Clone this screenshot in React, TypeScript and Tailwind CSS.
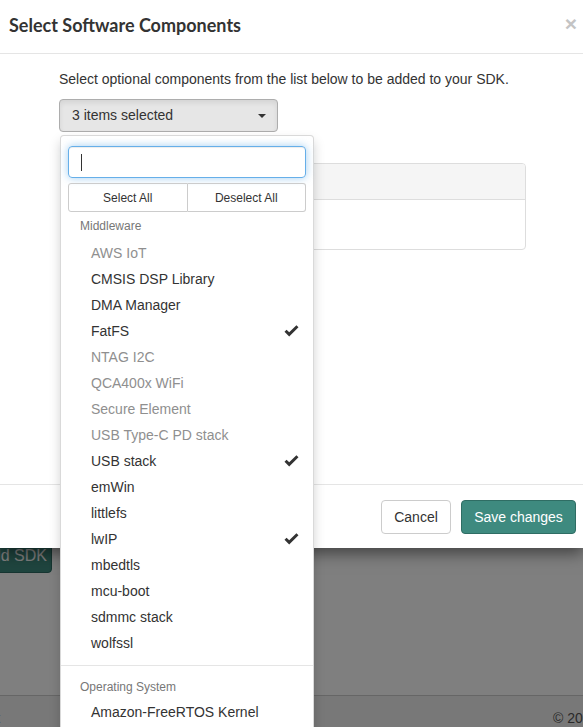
import React from "react";

type Item = { label: string; disabled?: boolean; checked?: boolean };

const middleware: Item[] = [
  { label: "AWS IoT", disabled: true },
  { label: "CMSIS DSP Library" },
  { label: "DMA Manager" },
  { label: "FatFS", checked: true },
  { label: "NTAG I2C", disabled: true },
  { label: "QCA400x WiFi", disabled: true },
  { label: "Secure Element", disabled: true },
  { label: "USB Type-C PD stack", disabled: true },
  { label: "USB stack", checked: true },
  { label: "emWin" },
  { label: "littlefs" },
  { label: "lwIP", checked: true },
  { label: "mbedtls" },
  { label: "mcu-boot" },
  { label: "sdmmc stack" },
  { label: "wolfssl" },
];

function Check() {
  return (
    <svg width="15" height="12" viewBox="0 0 15 12" className="shrink-0">
      <path d="M0.5 6.8 L2.6 4.7 L5.2 7.3 L12.4 0.2 L14.5 2.3 L5.2 11.6 Z" fill="#333" />
    </svg>
  );
}

function MenuItem({ item }: { item: Item }) {
  return (
    <div
      className={`flex items-center h-[26px] pl-[30px] pr-[14px] text-[14px] ${
        item.disabled ? "text-[#8f8f8f]" : "text-[#333]"
      }`}
    >
      <span className="flex-1">{item.label}</span>
      {item.checked && <Check />}
    </div>
  );
}

function Dropdown() {
  return (
    <div className="absolute left-[1px] top-[36px] w-[254px] bg-white border border-black/15 rounded-[4px] shadow-[0_6px_12px_rgba(0,0,0,0.175)] pt-[10px] pb-[6px]">
      <div className="px-[7px]">
        <div className="h-[32px] border border-[#66afe9] rounded-[4px] shadow-[inset_0_1px_1px_rgba(0,0,0,0.075),0_0_8px_rgba(102,175,233,0.6)] flex items-center pl-[12px]">
          <span className="w-[1px] h-[17px] bg-[#333]" />
        </div>
        <div className="flex mt-[5px] h-[29px] text-[12px] text-[#333]">
          <div className="flex-1 flex items-center justify-center border border-[#ccc] rounded-l-[3px]">Select All</div>
          <div className="flex-1 flex items-center justify-center border border-l-0 border-[#ccc] rounded-r-[3px]">Deselect All</div>
        </div>
      </div>
      <div className="pl-[19px] pt-[6px] h-[28px] text-[12px] text-[#777] leading-[17px]">Middleware</div>
      {middleware.map((it) => (
        <MenuItem key={it.label} item={it} />
      ))}
      <div className="h-[1px] bg-[#e5e5e5] mt-[9px] mb-[10px]" />
      <div className="pl-[19px] h-[23px] text-[12px] text-[#777] leading-[17px] pt-[3px]">Operating System</div>
      <MenuItem item={{ label: "Amazon-FreeRTOS Kernel" }} />
      <MenuItem item={{ label: "Baremetal" }} />
    </div>
  );
}

export default function App() {
  return (
    <div className="relative h-[727px] w-full overflow-hidden bg-white font-['Liberation_Sans',Arial,sans-serif] text-[#333]">
      {/* page behind the modal */}
      <div className="flex flex-col h-full">
        <div className="h-[520px]" />
        <div className="flex">
          <div className="ml-[-67px] h-[53px] w-[119px] bg-[#3e8a7f] border border-[#2f6d64] rounded-[4px] text-white text-[16px] flex items-end pb-[4px] pl-[40px] whitespace-nowrap">
            Build SDK
          </div>
        </div>
        <div className="flex-1" />
        <div className="h-[32px] border-t border-[#ccc] bg-[#f0f0f0] flex justify-between items-center text-[14px] text-[#555] pt-[14px] whitespace-nowrap">
          <span className="ml-[-49px]">Support</span>
          <span className="mr-[-48px]">© 2021 NXP</span>
        </div>
      </div>

      {/* backdrop */}
      <div className="absolute inset-0 bg-black/50" />

      {/* modal */}
      <div className="absolute top-0 left-0 right-0 bg-white shadow-[0_5px_15px_rgba(0,0,0,0.5)]">
        <div className="h-[54px] border-b border-[#e5e5e5] flex items-start pt-[12px] pl-[9px] pr-[6px]">
          <h4 className="flex-1 font-['Lato',sans-serif] font-bold text-[18px] leading-[26px] text-[#333]">
            Select Software Components
          </h4>
          <span className="text-[#c4c4c4] font-bold text-[21px] leading-[16px] mt-[4px]">×</span>
        </div>
        <div className="h-[430px] pl-[59px] pt-[15px]">
          <div className="relative w-[467px]">
            <p className="text-[14px] leading-[20px] text-[#333]">
              Select optional components from the list below to be added to your SDK.
            </p>
            <div className="relative mt-[10px]">
              <div className="w-[219px] h-[33px] bg-[#e6e6e6] border border-[#adadad] rounded-[4px] flex items-center pl-[12px] pr-[11px] text-[14px] shadow-[inset_0_3px_5px_rgba(0,0,0,0.08)]">
                <span className="flex-1">3 items selected</span>
                <span className="w-0 h-0 border-l-[4px] border-r-[4px] border-t-[4px] border-l-transparent border-r-transparent border-t-[#333]" />
              </div>
              <div className="mt-[31px] ml-[1px] h-[87px] border border-[#ddd] rounded-[4px] overflow-hidden">
                <div className="h-[36px] bg-[#f5f5f5] border-b border-[#ddd]" />
              </div>
              <Dropdown />
            </div>
          </div>
        </div>
        <div className="border-t border-[#e5e5e5] flex justify-end gap-[10px] pt-[15px] pb-[14px] pr-[7px]">
          <div className="h-[34px] w-[70px] border border-[#ccc] rounded-[4px] flex items-center justify-center text-[14px] text-[#333] bg-white">
            Cancel
          </div>
          <div className="h-[34px] w-[115px] border border-[#2f6d64] rounded-[4px] flex items-center justify-center text-[14px] text-white bg-[#3e8a7f]">
            Save changes
          </div>
        </div>
      </div>
    </div>
  );
}
